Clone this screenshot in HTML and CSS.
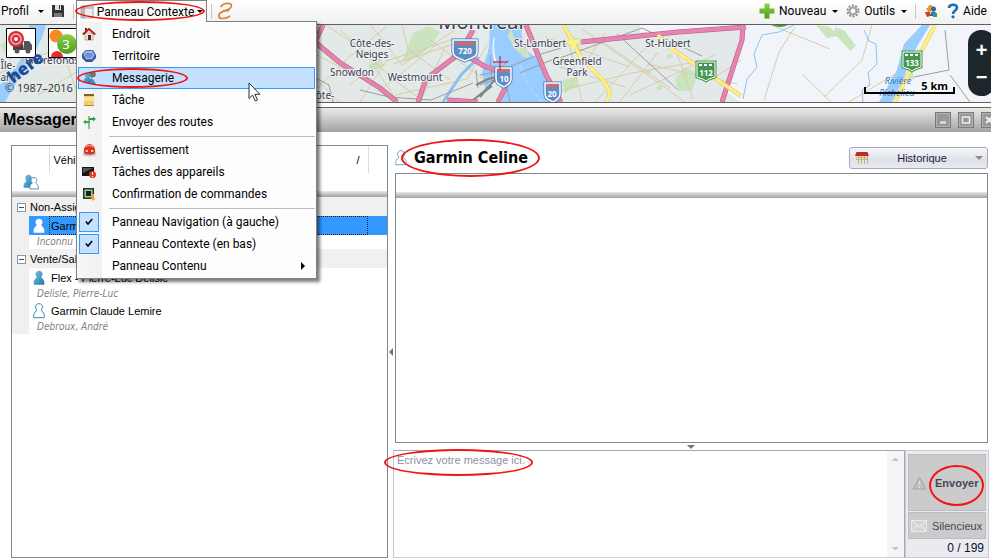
FILE: index.html
```
<!DOCTYPE html>
<html lang="fr">
<head>
<meta charset="utf-8">
<meta name="viewport" content="width=device-width, initial-scale=1">
<title>Messagerie</title>
<link rel="stylesheet" href="styles.css">
</head>
<body>
<svg width="0" height="0" class="defs" aria-hidden="true">
  <defs>
    <linearGradient id="blue" x1="0" y1="0" x2="1" y2="1"><stop offset="0" stop-color="#7cc6e6"/><stop offset="1" stop-color="#1b79ad"/></linearGradient>
    <linearGradient id="green" x1="0" y1="0" x2="0" y2="1"><stop offset="0" stop-color="#8ed04a"/><stop offset="1" stop-color="#4d9d16"/></linearGradient>
    <symbol id="person" viewBox="0 0 12 16"><path d="M6 .7c2 0 3.500 1.500 3.500 3.400 0 1.300-.7 2.200-1.300 3 .2 1 3 2.200 3.200 5.500l-.2 2.100H.8l-.2-2.100C.8 9.300 3.600 8.100 3.800 7.100c-.6-.8-1.300-1.700-1.300-3C2.500 2.200 4 .7 6 .7z"/></symbol>
  </defs>
</svg>

<header class="toolbar">
  <button class="tool profile">Profil<i class="caret"></i></button>
  <button class="tool save" aria-label="Enregistrer">
    <svg width="14" height="14" viewBox="0 0 14 14"><path d="M1 1h11l1 1v11H1z" fill="#333"/><path d="M4 1h6v5H4z" fill="#ddd"/><path d="M8 1h1v4H8z" fill="#333"/><path d="M3 9h8v4H3z" fill="#777"/></svg>
  </button>
  <i class="divider"></i>
  <div class="context">
    <button class="context-button" aria-haspopup="menu" aria-expanded="true">
      <svg width="14" height="14" viewBox="0 0 14 14"><path d="M1 1h12v12H1z" fill="#eee" stroke="#aaa"/><path d="M1 1h4v12H1z" fill="#b5b5b5"/><path d="M1 3h12" stroke="#999"/></svg>
      Panneau Contexte<i class="caret"></i>
      <i class="mark mark-context"></i>
    </button>
    <ul class="menu" role="menu">
      <li><button role="menuitem"><span class="ico"><svg width="14" height="14" viewBox="0 0 14 14"><path d="M3 6h8v7H3z" fill="#e8e2da" stroke="#b9aea2"/><path d="M6 8h3v5H6z" fill="#6d1d14"/><path d="M3 1h2v4H3z" fill="#8c1a1a"/><path d="M.8 7.500 7 2l6.200 5.500" fill="none" stroke="#b32222" stroke-width="2"/></svg></span>Endroit</button></li>
      <li><button role="menuitem"><span class="ico"><svg width="16" height="14" viewBox="0 0 16 14"><path d="M1 5 5 1h7l3 5v3l-4 4H5L1 9z" fill="#33569c"/><path d="M2 5 5 1.500h6.500L14 6l-3 4.500H5z" fill="#9db9e6" stroke="#4a6fb8"/><path d="M5 4h6l1 2-2 3H6L4 6z" fill="#6b8fcf"/></svg></span>Territoire</button></li>
      <li><button role="menuitem" class="active"><span class="ico"><svg width="16" height="16" viewBox="0 0 16 16"><path d="M8 2h6l1 2-1 3h-2l-2 2V7L8 6z" fill="#6a737c"/><use href="#person" x="2" y="2" width="9" height="12" fill="url(#blue)"/><path d="M9 9h3l3 5h-5z" fill="#2c95c8"/></svg></span>Messagerie<i class="mark mark-message"></i></button></li>
      <li><button role="menuitem"><span class="ico"><svg width="14" height="14" viewBox="0 0 14 14"><path d="M2 1h10v12H2z" fill="#ecd06f"/><path d="M2 1h10v2H2z" fill="#85601e"/><path d="M2 4h10v4H2z" fill="#f6e29a"/><path d="M2 12.500h10" stroke="#b88b32"/></svg></span>Tâche</button></li>
      <li><button role="menuitem"><span class="ico"><svg width="14" height="14" viewBox="0 0 14 14"><path d="M7 1v13" stroke="#8aa08a" stroke-width="1.500"/><path d="M7 3h4V1.500L14 4l-3 2.500V5H7z" fill="#2d9c39"/><path d="M8 6H4V4.500L1 7l3 2.500V8h4z" fill="#2db43b"/></svg></span>Envoyer des routes</button></li>
      <li class="rule" role="separator"></li>
      <li><button role="menuitem"><span class="ico"><svg width="15" height="14" viewBox="0 0 15 14"><ellipse cx="7.500" cy="11" rx="7" ry="2.500" fill="#c5c5c5"/><path d="M2 10C1 5 4 1 7.500 1S14 5 13 10c-3 2-8 2-11 0z" fill="#d9302a"/><path d="M4 4c2-2 5-2 7 0" stroke="#ff9b8d" stroke-width="1.500" fill="none"/><path d="M3 7h3v2H4zM9 7h3l-1 2H9z" fill="#ffc56a"/></svg></span>Avertissement</button></li>
      <li><button role="menuitem"><span class="ico"><svg width="14" height="14" viewBox="0 0 14 14"><path d="M0 2h12v9H0z" fill="#161616"/><path d="M1 3h10L1 8z" fill="#555"/><circle cx="10.500" cy="9.500" r="3.500" fill="#ee3524"/><path d="M10.500 7v3M10.500 11v1" stroke="#fff"/></svg></span>Tâches des appareils</button></li>
      <li><button role="menuitem"><span class="ico"><svg width="14" height="14" viewBox="0 0 14 14"><path d="M1 1h11v11H1z" fill="#163f18"/><path d="M2.500 2.500h8v8h-8z" fill="#a9c4a4"/><path d="M4 4h5v5H4z" fill="#17221c"/><path d="M10 7h2v4h1.500L11 14l-2.500-3H10z" fill="#e9a31c"/></svg></span>Confirmation de commandes</button></li>
      <li class="rule" role="separator"></li>
      <li><button role="menuitemcheckbox" aria-checked="true"><span class="ico checked"><svg width="8" height="8" viewBox="0 0 8 8"><path d="M.8 3.500 3 6 7.200 1" fill="none" stroke="#000" stroke-width="1.500"/></svg></span>Panneau Navigation (à gauche)</button></li>
      <li><button role="menuitemcheckbox" aria-checked="true"><span class="ico checked"><svg width="8" height="8" viewBox="0 0 8 8"><path d="M.8 3.500 3 6 7.200 1" fill="none" stroke="#000" stroke-width="1.500"/></svg></span>Panneau Contexte (en bas)</button></li>
      <li><button role="menuitem"><span class="ico"></span>Panneau Contenu<i class="more"></i></button></li>
    </ul>
    <svg class="cursor" width="14" height="20" viewBox="0 0 14 20" aria-hidden="true"><path d="M1 1v15.500l3.600-3.400 2.600 5.900 2.300-1-2.600-5.700h5z" fill="#fff" stroke="#222b3c"/></svg>
  </div>
  <i class="divider"></i>
  <button class="tool" aria-label="Accueil">
    <svg width="17" height="18" viewBox="0 0 17 18"><path d="M3.500 5C6 .8 15 0 14.500 3.700 14 6.700 10 8.600 5.500 9M12.500 8.300C5 8.300 1.500 11.500 1.800 14.300c.4 3.200 7 2.700 11.200-.3" fill="none" stroke="#d9843b" stroke-width="1.700"/></svg>
  </button>
  <nav class="tools-right">
    <button class="tool"><svg width="16" height="16" viewBox="0 0 16 16"><path d="M5.500.5h5v5h5v5h-5v5h-5v-5h-5v-5h5z" fill="url(#green)"/></svg>Nouveau<i class="caret"></i></button>
    <button class="tool"><svg width="14" height="14" viewBox="0 0 14 14"><circle cx="7" cy="7" r="5.500" fill="none" stroke="#8f8f8f" stroke-width="2" stroke-dasharray="2 1.450"/><circle cx="7" cy="7" r="3.500" fill="none" stroke="#a2a2a2" stroke-width="2.200"/></svg>Outils<i class="caret"></i></button>
    <i class="divider"></i>
    <button class="tool people" aria-label="Utilisateurs"><svg width="14" height="14" viewBox="0 0 14 14"><circle cx="6.500" cy="3.500" r="2.500" fill="#d9a02f"/><path d="M2 4h5v4H4z" fill="#e49b21"/><path d="m1 8 5 0v4l-3 1z" fill="#d23c2c"/><circle cx="9.500" cy="5" r="2.500" fill="#2c67b5"/><path d="M6 12c0-6 7-6 7 0z" fill="#2763b8"/><path d="M9 9h4v4H9z" fill="#4d9b3f"/></svg></button>
    <a class="tool" href="#aide"><svg width="12" height="16" viewBox="0 0 12 16"><path d="M2 5c0-4 8-4.500 8-.5 0 3-4 3-4 6.500" fill="none" stroke="#1b6fb0" stroke-width="2.600"/><circle cx="6" cy="13.800" r="1.600" fill="#1b6fb0"/></svg>Aide</a>
  </nav>
</header>

<section class="map" aria-label="Carte">
  <svg class="map-drawing" viewBox="0 0 991 77" preserveAspectRatio="xMinYMin slice">
    <path d="M0 0h991v77H0z" fill="#e2e9e7"/>
    <path d="M640 0h351v77H740l-40-30-60-10z" fill="#f1f5f9"/>
    <path d="m640 10 60-6 42-2-20 75h-90z" fill="#e3e8ea"/>
    <g fill="#cbe4c0"><path d="m413 8 16-7 11 6-8 12-14 13-16 5z"/><path d="m368 40 12-5 5 6-14 5z"/><path d="m685 42 13 6-6 18-14 0-3-12z"/><path d="m816 0 14 2 8 9-11 2z"/><path d="m835 2 10 4 11 15-6 5-16-18z"/><path d="m562 55 14-3 2 10-14 5z"/><path d="m565 10 18 4-4 10z"/><path d="m0 20 12-8 10 14-12 9z"/><path d="m641 7 9 1-3 6z"/><path d="m907 48 6 0 1 6-6 1z"/><path d="m645 46 6-2 1 4-5 2zM666 30l5-2 2 4-5 2zM656 62l6-2v5h-5z"/></g>
    <g fill="#99ccff"><path d="M490 0h34l-3 8 6 18 12 9 10 22 11 20h-58l4-18-9-7-8 6-3 10-4-20 7-26z"/><path d="M29 0h17l-4 13-8 15-12 20-17 29H0V60l15-17 14-22z"/><path d="M922 0h8l-18 30-8 23-12 24h-13l18-32 7-26z"/></g>
    <path d="M512 0c-2 10 6 18 14 24l4 8-5 1-11-10-6-12z" fill="#cfe3c4"/>
    <path d="M482 0h6v6h-4v5h4v5h-5v8h5v4l-5 2v14l-6-14V8z" fill="#e6ecee"/>
    <path d="M495 12c-2 10 0 20 2 26l-3-2c-2-8-2-18 0-24z" fill="#eef3f6"/>
    <path d="m520 40 8 20 14 17" fill="none" stroke="#c4e0f8" stroke-dasharray="6 2"/>
    <g fill="none" stroke="#d8cda9" stroke-width="1">
      <path d="M310 70 347 34 386 2M326 0l37 25 35 52M315 29l67 35 53-43M340 5l53 49 30 22M371 0l31 40 53-35M360 77l26-41 68-22M393 39l67-22M395 70l72-16 20-34M420 77l26-57M402 0l6 24 42 31M430 15l55 40M317 55l22 22M350 60l34-28"/>
      <path d="m545 12 85 30M570 22l12 55M582 4l53 37 50 36M550 68l82-20 64-11M605 8l-40 60M620 77l38-50M674 20l19 54M647 39l90 20M600 15l70 48M715 30l-85 40M560 42l65 20M595 77l56-60"/>
      <path d="M795 2 779 27 764 75M771 0l59 24M872 0l-10 35-38 37M849 77l46-28M803 50l28 27M741 35l-30 20M55 5l23 65M0 48l70-30M38 70l40-24M48 40l30-12"/>
    </g>
    <g fill="none" stroke="#8fc1ee"><path d="m794 0-15 7-17 3-8 19 3 13-10 12-4 20"/><path d="m864 5 5 11 7 3 1 20-9 9 2 12-8 5 1 12"/><path d="M991 17 979 44l-8 10"/><path d="m443 77 18-27 18-18" stroke="#89c1f2" stroke-width="3"/></g>
    <g fill="none" stroke="#9b9f9d"><path d="m360 65 29 7 42 3 42-17M310 50l19 10 4 17M480 50l16-3 13-12M480 60l14-5 14-12M475 73l21-18M510 77l-8-35M560 33l82-30 60 28M617 9l60 55M490 30l2 28 12-11M476 45l2 18M520 48l39-16M511 41l30-12 20-6"/><path d="M945 5l4 40-35 7M950 50l20 27"/></g>
    <path d="m476 60 12-6 10-2-8 8-10 12M470 77l14-10 8-6" fill="none" stroke="#7f8486" stroke-width="2"/>
    <g fill="none" stroke="#bd5586" stroke-width="5"><path d="M323 0 315 17l24 20 41 26 17 14M473 5 460 28l-34 26-8 23M466 30l18 11 20 7 1 15-7 14M526 0l20 50 15 27M447 75l31 2M581 17l97-10 68-5M743 0l-1 15-20 62"/></g>
    <g fill="none" stroke="#e385ae" stroke-width="4"><path d="M323 0 315 17l24 20 41 26 17 14M473 5 460 28l-34 26-8 23M466 30l18 11 20 7 1 15-7 14M526 0l20 50 15 27M447 75l31 2M581 17l97-10 68-5M743 0l-1 15-20 62"/></g>
    <g fill="none" stroke="#d9ca69" stroke-width="4"><path d="m563 0 10 17-10 0m10 0 8 16 22 22 7 12-3 10M658 10l10 11 73 50M935 0l-18 35-9 15-13 27"/></g>
    <g fill="none" stroke="#ffef83" stroke-width="3"><path d="m563 0 10 17-10 0m10 0 8 16 22 22 7 12-3 10M658 10l10 11 73 50M935 0l-18 35-9 15-13 27"/></g>
    <path d="m564 16 18-2-6 5-2 6-4-6z" fill="#fff080"/>
    <g class="shield">
      <g><path d="M453 15h24v12c0 5-6 6-12 9-6-3-12-4-12-9z" fill="#5c8dc6" stroke="#3f6fae" stroke-width="3"/><path d="M453 15h24v12c0 5-6 6-12 9-6-3-12-4-12-9z" fill="#5c8dc6" stroke="#fff" stroke-width="1.500"/><path d="M456 17h18v3h-18z" fill="#dc6565"/><text x="465" y="29">720</text></g>
      <g><path d="M496 43h15v11c0 5-4 6-7 8-4-2-8-3-8-8z" fill="#5c8dc6" stroke="#3f6fae" stroke-width="3"/><path d="M496 43h15v11c0 5-4 6-7 8-4-2-8-3-8-8z" fill="#5c8dc6" stroke="#fff" stroke-width="1.500"/><path d="M498 44h11v3h-11z" fill="#dc6565"/><text x="504" y="57">10</text></g>
      <g><path d="M545 58h15v11c0 5-4 6-7 8-4-2-8-3-8-8z" fill="#5c8dc6" stroke="#3f6fae" stroke-width="3"/><path d="M545 58h15v11c0 5-4 6-7 8-4-2-8-3-8-8z" fill="#5c8dc6" stroke="#fff" stroke-width="1.500"/><path d="M547 59h11v3h-11z" fill="#dc6565"/><text x="552" y="72">20</text></g>
      <g><path d="M697 37h18v15l-6 2-3 2-3-2-6-2z" fill="#459653" stroke="#459653" stroke-width="3"/><path d="M697 37h18v15l-6 2-3 2-3-2-6-2z" fill="#459653" stroke="#fff"/><path d="M699 40h14" stroke="#fff" stroke-width="2" stroke-dasharray="3 2"/><text x="706" y="51">112</text></g>
      <g><path d="M903 27h18v15l-6 2-3 2-3-2-6-2z" fill="#459653" stroke="#459653" stroke-width="3"/><path d="M903 27h18v15l-6 2-3 2-3-2-6-2z" fill="#459653" stroke="#fff"/><path d="M905 30h14" stroke="#fff" stroke-width="2" stroke-dasharray="3 2"/><text x="912" y="41">133</text></g>
      <path d="M772 0h16q-8 4-16 0z" fill="#459653"/>
    </g>
    <g class="place">
      <text x="372" y="22">Côte-des-</text><text x="372" y="33">Neiges</text><text x="352" y="51">Snowdon</text><text x="415" y="56">Westmount</text><text x="540" y="22">St-Lambert</text><text x="577" y="40">Greenfield</text><text x="577" y="51">Park</text><text x="668" y="22">St-Hubert</text><text x="52" y="39">Pierrefonds</text><text x="8" y="44">Île-</text><text x="6" y="56">zard</text><text x="325" y="74">ôte-</text>
      <text class="city" x="481" y="4">Montréal</text>
    </g>
    <g class="water"><text x="898" y="59">Rivière</text><text x="897" y="71">Richelieu</text></g>
    <path d="M493 37h15M500 31v14" stroke="#c50b17"/>
    <text class="copyright" x="5" y="67">© 1987–2016</text>
    <path d="M865 62v6h89v-6" fill="none" stroke="#000" stroke-width="2"/>
    <text class="scale" x="948" y="65">5 km</text>
    <g><path d="M6.500 3.500h29v29h-29z" fill="#fff" stroke="#000"/><path d="M24 16h5l3 4v5h-8z" fill="#555"/><path d="m13 19 10 0 1 6H13z" fill="#444"/><circle cx="16" cy="14" r="8" fill="#d72e35"/><circle cx="16" cy="14" r="5" fill="none" stroke="#f3b6b6" stroke-width="1.500"/><circle cx="16" cy="14" r="2" fill="#fff"/><circle cx="17" cy="26" r="2.500" fill="#555"/><circle cx="28" cy="26" r="2.500" fill="#555"/></g>
    <text class="logo" transform="translate(13 59) rotate(-37)">here</text>
    <g><path d="M48.500 3.500h29v29h-29z" fill="#fff" stroke="#000"/><circle cx="56" cy="11" r="6.500" fill="#f78a24"/><path d="M51 32a6 6 0 0 1 12 0z" fill="#f02a2a"/><circle cx="67" cy="19" r="10" fill="url(#green)"/><text class="cluster" x="66" y="24">3</text></g>
  </svg>
  <div class="zoom"><button aria-label="Zoom avant">+</button><button aria-label="Zoom arrière">−</button></div>
</section>

<section class="window">
  <div class="titlebar">
    <h1>Messagerie</h1>
    <div class="window-buttons">
      <button aria-label="Réduire"><svg width="10" height="10" viewBox="0 0 10 10"><path d="M2 7.500h6" stroke="#eee" stroke-width="2"/></svg></button>
      <button aria-label="Agrandir"><svg width="10" height="10" viewBox="0 0 10 10"><path d="M1.500 2h7v6h-7z" fill="none" stroke="#eee" stroke-width="1.500"/></svg></button>
      <button aria-label="Fermer"><svg width="10" height="10" viewBox="0 0 10 10"><path d="m2 2 6 6M8 2 2 8" stroke="#eee" stroke-width="2"/></svg></button>
    </div>
  </div>

  <div class="content">
    <div class="vehicles">
      <table>
        <colgroup><col class="c-gutter"><col class="c-icon"><col><col class="c-end"></colgroup>
        <thead>
          <tr class="heads"><th colspan="2"></th><th><span>Véhicule</span><span>/</span></th><th></th></tr>
          <tr class="filter"><td colspan="4"><svg width="18" height="17" viewBox="0 0 18 17"><use href="#person" x="1" y="0" width="11" height="15" fill="url(#blue)"/><use href="#person" x="7" y="3" width="10" height="13" fill="#fff" stroke="#2d80ab"/></svg></td></tr>
          <tr class="shade"><td colspan="4"></td></tr>
        </thead>
        <tbody>
          <tr class="group"><td colspan="4"><i class="fold"></i>Non-Assigné</td></tr>
          <tr class="item selected"><td></td><td><svg width="12" height="16"><use href="#person" fill="#fff"/></svg></td><td>Garmin Celine</td><td></td></tr>
          <tr class="driver"><td></td><td colspan="3">Inconnu</td></tr>
          <tr class="group"><td colspan="4"><i class="fold"></i>Vente/Sales</td></tr>
          <tr class="item"><td></td><td><svg width="12" height="16"><use href="#person" fill="url(#blue)"/></svg></td><td>Flex - Pierre-Luc Delisle</td><td></td></tr>
          <tr class="driver"><td></td><td colspan="3">Delisle, Pierre-Luc</td></tr>
          <tr class="item"><td></td><td><svg width="12" height="16"><use href="#person" fill="#fff" stroke="#3a87ac"/></svg></td><td>Garmin Claude Lemire</td><td></td></tr>
          <tr class="driver"><td></td><td colspan="3">Debroux, André</td></tr>
        </tbody>
      </table>
    </div>

    <div class="splitter"><i></i></div>

    <div class="conversation">
      <div class="recipient">
        <svg width="12" height="16"><use href="#person" fill="#fff" stroke="#6fa6c0"/></svg>
        <h2>Garmin Celine<i class="mark mark-name"></i></h2>
        <button class="history-button"><svg width="14" height="12" viewBox="0 0 14 12"><path d="M1 1h12v10H1z" fill="#efe6cf"/><path d="M1 5.500h12M1 7.500h12" stroke="#d8b060"/><path d="M3.500 4v8M6.500 4v8M9.500 4v8M12.500 4v8" stroke="#b5b0a5"/><path d="M1.500 0h11L14 4H0z" fill="#bd2c20"/></svg><span>Historique</span><i class="caret"></i></button>
      </div>
      <div class="history"><div class="history-head"></div></div>
      <div class="splitter-row"><i></i></div>
      <form class="composer">
        <div class="message">
          <textarea aria-label="Message" placeholder="Écrivez votre message ici."></textarea>
          <div class="scroll"><i class="up"></i><i class="down"></i></div>
          <i class="mark mark-placeholder"></i>
        </div>
        <div class="send-panel">
          <button type="button" class="send"><svg width="15" height="14" viewBox="0 0 15 14"><path d="M7.500 1 14 13H1z" fill="#bdbdbd" stroke="#a6a6a6"/><path d="M7.500 5v4M7.500 10.500V12" stroke="#e2e2e2" stroke-width="1.500"/></svg>Envoyer<i class="mark mark-send"></i></button>
          <button type="button" class="silent"><svg width="16" height="12" viewBox="0 0 16 12"><path d="M.5.5h15v11H.5z" fill="#d4d4d4" stroke="#eaeaea"/><path d="m1 1 7 6 7-6M1 11l5-5M15 11l-5-5" fill="none" stroke="#f2f2f2"/></svg>Silencieux</button>
          <output>0 / 199</output>
        </div>
      </form>
    </div>
  </div>
</section>
</body>
</html>
```
FILE: styles.css
```
* { box-sizing: border-box; }

body {
  margin: 0;
  height: 100vh;
  display: flex;
  flex-direction: column;
  overflow: hidden;
  background: #fff;
  color: #000;
  font: 12px/16px Roboto, "Open Sans", sans-serif;
}

button, textarea { font: inherit; color: inherit; }
button { border: 0; padding: 0; background: none; white-space: nowrap; }
svg { display: block; flex: none; }
h1, h2, ul { margin: 0; padding: 0; }
.defs { position: absolute; }

/* Red ellipses that point out the parts to use */
.mark {
  position: absolute;
  border: 2px solid #f01414;
  border-radius: 50%;
  pointer-events: none;
}

.caret {
  border: 3px solid transparent;
  border-top-color: currentColor;
  border-bottom: 0;
}

/* Toolbar */
.toolbar {
  flex: none;
  height: 24px;
  display: flex;
  align-items: center;
  padding-bottom: 2px;
  background: linear-gradient(#fff, #f0f0f0);
  position: relative;
  z-index: 2;
}
.tool {
  display: flex;
  align-items: center;
  gap: 4px;
  height: 22px;
  color: inherit;
  text-decoration: none;
}
.tool .caret { margin-left: 2px; }
.profile { width: 44px; padding-left: 1px; justify-content: space-between; gap: 0; }
.save { margin: 0 8px 0 7px; }
.divider { width: 1px; height: 15px; background: #c6c6c6; }
.toolbar > .context { margin: 0 4px 0 2px; }
.toolbar > .divider + .tool { margin-left: 5px; }
.tools-right {
  margin-left: auto;
  padding-right: 4px;
  display: flex;
  align-items: center;
  gap: 8px;
}
.people { margin-right: 1px; }

.context { position: relative; height: 22px; }
.context-button {
  position: relative;
  z-index: 2;
  display: flex;
  align-items: center;
  justify-content: space-between;
  width: 131px;
  height: 22px;
  padding: 0 3px;
  border: 1px solid #808080;
  border-bottom: 0;
  background: #fcfcfc;
}
.mark-context { left: -2px; right: 1px; top: 0; height: 20px; }

.menu {
  position: absolute;
  left: 0;
  top: 21px;
  width: 241px;
  padding: 1px;
  list-style: none;
  border: 1px solid #808080;
  background: linear-gradient(90deg, #f8f8f8, #f0f0f0 25px, #fdfdfd 25px);
  box-shadow: 3px 3px 3px rgba(0, 0, 0, .5);
}
.menu button {
  position: relative;
  display: flex;
  align-items: center;
  width: 100%;
  height: 22px;
  border: 1px solid transparent;
  text-align: left;
}
.menu .active { background: #c4e1ff; border-color: #3399ff; }
.ico {
  flex: none;
  width: 20px;
  height: 20px;
  margin-right: 13px;
  display: grid;
  place-items: center;
}
.checked { border: 1px solid #3399ff; background: #c4e1ff; }
.rule { height: 6px; padding: 3px 0 0 31px; }
.rule::before { content: ""; display: block; height: 1px; background: #bdbdbd; }
.more {
  margin-left: auto;
  margin-right: 9px;
  border: 4px solid transparent;
  border-left-color: #000;
  border-right: 0;
}
.mark-message { left: -2px; top: 0; width: 111px; height: 20px; }
.cursor { position: absolute; left: 172px; top: 82px; }

/* Map */
.map {
  flex: none;
  height: 79px;
  position: relative;
  overflow: hidden;
  border-top: 1px solid #606060;
  border-bottom: 1px solid #606060;
}
.map-drawing { width: 100%; height: 77px; }
.map text { font-family: "Noto Sans", "Open Sans", sans-serif; }
.place text {
  font-size: 10px;
  fill: #3d3a52;
  stroke: #eef2f2;
  stroke-width: 2px;
  paint-order: stroke;
  text-anchor: middle;
}
.place .city { font-size: 20px; }
.shield text { font-size: 8px; font-weight: 700; fill: #fff; text-anchor: middle; }
.water text { font-size: 9px; font-style: italic; fill: #3874bb; text-anchor: middle; }
.map .logo { font-size: 17px; font-weight: 900; fill: #1c4c9a; }
.map .copyright { font: 11px "Open Sans", sans-serif; fill: #333; }
.map .scale { font-size: 11px; font-weight: 700; text-anchor: end; stroke: #fff; stroke-width: 2px; paint-order: stroke; }
.map .cluster { font-size: 13px; fill: #fff; text-anchor: middle; }
.zoom {
  position: absolute;
  right: -4px;
  top: 5px;
  width: 27px;
  height: 66px;
  padding: 6px 0;
  display: grid;
  border-radius: 13px;
  background: #1d262a;
  color: #fff;
  font: bold 20px/20px "Liberation Sans", sans-serif;
}

/* Window */
.window {
  flex: 1;
  min-height: 0;
  margin-top: 4px;
  display: flex;
  flex-direction: column;
}
.titlebar {
  flex: none;
  height: 25px;
  display: flex;
  align-items: center;
  justify-content: space-between;
  padding-left: 3px;
  border-top: 1px solid #606060;
  background: linear-gradient(#eaeaea, #a2a2a2);
}
h1 { font: bold 16px/20px "Liberation Sans", sans-serif; }
.window-buttons { display: flex; gap: 7px; margin-right: -6px; }
.window-buttons button {
  width: 16px;
  height: 16px;
  display: grid;
  place-items: center;
  border: 1px solid #777;
  background: #999;
  box-shadow: inset 0 0 0 1px #b3b3b3;
}

.content {
  flex: 1;
  min-height: 0;
  display: flex;
  padding: 13px 2px 1px 11px;
  font: 11px/14px "Liberation Sans", sans-serif;
}

/* Vehicle list */
.vehicles { flex: 0 0 377px; border: 1px solid #828790; }
table { width: 100%; table-layout: fixed; border-collapse: collapse; }
td, th { padding: 0; font-weight: 400; }
.c-gutter { width: 17px; }
.c-icon { width: 20px; }
.c-end { width: 19px; }
.heads th { height: 27px; border-right: 1px solid #dcdcdc; }
.heads th:last-child { border: 0; }
.heads span:first-child { float: left; padding-left: 4px; }
.heads span:last-child { float: right; padding-right: 8px; }
.filter td { height: 18px; padding-left: 10px; }
.shade td, .history-head {
  height: 6px;
  background: linear-gradient(#e8e8e8, #c4c4c4 50%, #a0a0a0);
}
.group td { height: 19px; background: #f0f0f0; }
.fold {
  float: left;
  width: 9px;
  height: 9px;
  margin: 3px 4px 0 5px;
  border: 1px solid #8b95a8;
  background: linear-gradient(#3d4d75, #3d4d75) center / 5px 1px no-repeat #fff;
}
.item td { height: 19px; }
.item td:nth-child(2) { padding-left: 4px; }
.item td:nth-child(3) { padding-left: 2px; }
.item td:first-child, .driver td:first-child { background: #f0f0f0; }
.selected td:not(:first-child) { background: #3399ff; }
.selected td:nth-child(3) { outline: 1px dotted #124; outline-offset: -1px; }
.driver td {
  height: 14px;
  font: italic 10px/14px "DejaVu Sans Condensed", sans-serif;
  color: #808080;
}
.driver td:last-child { padding-left: 8px; }

.splitter { flex: none; width: 5px; display: grid; place-items: center; }
.splitter i { border: 4px solid transparent; border-right-color: #6d7482; border-left: 0; }

/* Conversation */
.conversation { flex: 1; min-width: 0; display: flex; flex-direction: column; }
.recipient { flex: none; height: 28px; display: flex; align-items: center; padding: 0 1px 2px 2px; }
h2 {
  position: relative;
  margin-left: 7px;
  font: bold 16px/20px "DejaVu Sans Condensed", "DejaVu Sans", sans-serif;
}
.mark-name { left: -13px; right: -12px; top: -9px; height: 38px; }
.history-button {
  margin-left: auto;
  width: 139px;
  height: 22px;
  display: flex;
  align-items: center;
  justify-content: space-between;
  padding: 0 4px 0 5px;
  border: 1px solid #a5abb8;
  border-radius: 3px;
  background: linear-gradient(#f6f7fa, #dfe1e8 60%, #e8eaf0);
  color: #1c1c40;
}
.history-button .caret { border-width: 4px; border-bottom: 0; color: #858b99; border-top-color: #858b99; }
.history { flex: 1; min-height: 0; margin: 0 1px 0 2px; padding-top: 18px; border: 1px solid #828790; }
.splitter-row { flex: none; height: 7px; display: grid; place-items: center; }
.splitter-row i { border: 4px solid transparent; border-top-color: #6d7482; border-bottom: 0; }

.composer { flex: none; height: 108px; display: flex; }
.message {
  position: relative;
  flex: 1;
  display: flex;
  border: 1px solid #a5a8b4;
  border-bottom-color: #d0d0d0;
  border-left-color: #c4c4c8;
}
textarea { flex: 1; border: 0; padding: 2px 3px; resize: none; background: none; outline: 0; }
textarea::placeholder { color: #8f8fa3; opacity: 1; }
.scroll {
  width: 17px;
  padding: 7px 5px;
  display: flex;
  flex-direction: column;
  justify-content: space-between;
  background: #f5f5f8;
}
.scroll i { border: 3px solid transparent; }
.scroll .up { border-bottom-color: #bfc1c8; border-top: 0; }
.scroll .down { border-top-color: #bfc1c8; border-bottom: 0; }
.mark-placeholder { left: -10px; top: -2px; width: 149px; height: 27px; }

.send-panel {
  width: 84px;
  display: flex;
  flex-direction: column;
  gap: 1px;
  padding: 3px 2px 1px;
  border: 1px solid #c9ccd6;
  background: #e9ebf1;
  color: #444752;
}
.send-panel button {
  position: relative;
  display: flex;
  align-items: center;
  border: 1px solid #bdbdbd;
  background: #cbcbcb;
}
.send { height: 58px; gap: 8px; padding-left: 3px; font-weight: 700; }
.silent { height: 27px; gap: 5px; padding-left: 2px; }
.send-panel output { color: #101030; text-align: right; padding-right: 2px; font-size: 12px; line-height: 16px; }
.mark-send { right: 1px; top: 10px; width: 55px; height: 41px; }
```
